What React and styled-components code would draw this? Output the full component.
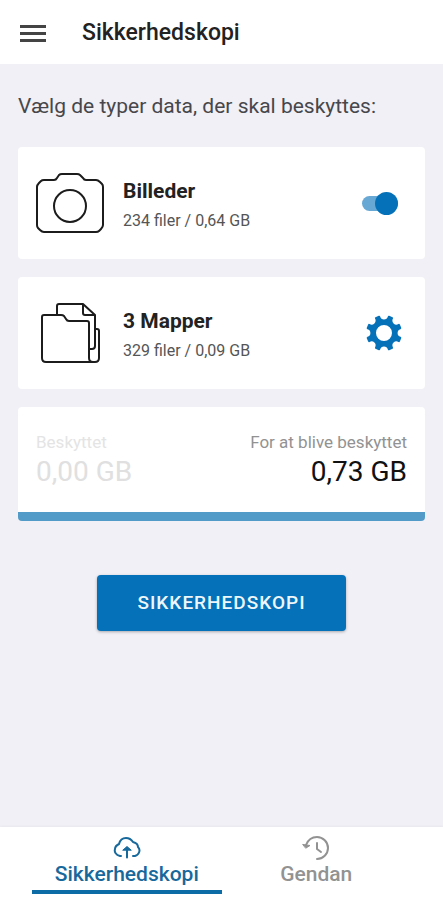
import { useState } from "react";
import styled, { createGlobalStyle } from "styled-components";

function gearPath() {
  const point = (deg) => {
    const a = (deg * Math.PI) / 180;
    return `${(19 + 17 * Math.cos(a)).toFixed(2)} ${(19 + 17 * Math.sin(a)).toFixed(2)}`;
  };
  let d = "";
  for (let i = 0; i < 8; i++) {
    const a = 22.5 + i * 45;
    d += `${i === 0 ? "M" : "L"}${point(a - 6)}L${point(a + 6)}`;
    d += `A5 5 0 0 0 ${point(a + 39)}`;
  }
  return `${d}ZM28 19a9 9 0 1 0-18 0a9 9 0 1 0 18 0Z`;
}

function CameraIcon() {
  return (
    <svg width="70" height="64" viewBox="0 0 70 64" fill="none" stroke="#1c1c1c" strokeWidth="2" strokeLinejoin="round" aria-hidden="true">
      <path d="M9 9H19Q21 9 22 7L24 4Q25 3 27 3H42Q44 3 45 4L48 7Q49 9 51 9H61Q63 9 65 11L67 13Q68 14 68 16V54Q68 56 66 58L64 60Q63 61 61 61H9Q7 61 5 59L3 57Q2 56 2 54V16Q2 14 4 12L6 10Q7 9 9 9Z" />
      <circle cx="35" cy="35" r="16" />
    </svg>
  );
}

function FoldersIcon() {
  return (
    <svg width="70" height="64" viewBox="0 0 70 64" fill="none" stroke="#1c1c1c" strokeWidth="2" strokeLinejoin="round" aria-hidden="true">
      <path d="M22 13V5Q22 3 24 3H48L60 14V45Q60 48 57 48H54" />
      <path d="M48 3V12Q48 14 50 14H59" />
      <path d="M60 28H62Q64 28 64 30V57Q64 61 60 61H58Q54 61 54 57V22Q54 20 52 20H34Q32 20 31 18L29 15Q28 14 26 14H9Q7 14 7 16V57Q7 61 11 61H58" />
    </svg>
  );
}

function CloudIcon() {
  return (
    <svg width="28" height="24" viewBox="0 0 28 24" fill="none" stroke="currentColor" strokeWidth="2" strokeLinecap="round" strokeLinejoin="round" aria-hidden="true">
      <path d="M8 20H7C3 19 1 16 2 13C2 10 4 9 6 8C7 4 10 2 13 2C16 2 18 3 20 6C24 7 25 9 25 11C28 14 26 19 22 20H20" />
      <path d="M14 21.5V12" />
      <path d="M10 14L14 10.5L18 14Z" fill="currentColor" strokeWidth="1" />
    </svg>
  );
}

function HistoryIcon() {
  return (
    <svg width="28" height="24" viewBox="0 0 28 24" fill="none" stroke="currentColor" strokeWidth="2" strokeLinecap="round" strokeLinejoin="round" aria-hidden="true">
      <path d="M4 9C6 4 10 1 15 1C21 1 26 6 26 12C26 18 21 23 15 23" />
      <path d="M1 8.5L8 9.5L4 12Z" fill="currentColor" strokeWidth="1" />
      <path d="M15 7V13L19 16" />
    </svg>
  );
}

function App() {
  const [pictures, setPictures] = useState(true);

  return (
    <Page>
      <GlobalStyle />
      <Header>
        <MenuButton aria-label="Menu">
          <span />
          <span />
          <span />
        </MenuButton>
        <Title>Sikkerhedskopi</Title>
      </Header>
      <Main>
        <Intro>Vælg de typer data, der skal beskyttes:</Intro>
        <Cards>
          <Card>
            <CameraIcon />
            <CardText>
              <CardTitle as="label" htmlFor="pictures">
                Billeder
              </CardTitle>
              <CardInfo>234 filer / 0,64 GB</CardInfo>
            </CardText>
            <Switch
              type="checkbox"
              role="switch"
              id="pictures"
              checked={pictures}
              onChange={(e) => setPictures(e.target.checked)}
            />
          </Card>
          <Card>
            <FoldersIcon />
            <CardText>
              <CardTitle>3 Mapper</CardTitle>
              <CardInfo>329 filer / 0,09 GB</CardInfo>
            </CardText>
            <GearButton aria-label="Indstillinger">
              <svg width="38" height="38" viewBox="0 0 38 38">
                <path d={gearPath()} fill="#0571b8" fillRule="evenodd" stroke="#0571b8" strokeWidth="2" strokeLinejoin="round" />
              </svg>
            </GearButton>
          </Card>
          <Summary>
            <Amount $faded>
              <AmountLabel>Beskyttet</AmountLabel>
              <AmountValue>0,00 GB</AmountValue>
            </Amount>
            <Amount $right>
              <AmountLabel>For at blive beskyttet</AmountLabel>
              <AmountValue>0,73 GB</AmountValue>
            </Amount>
          </Summary>
        </Cards>
        <BackupButton>Sikkerhedskopi</BackupButton>
      </Main>
      <TabBar>
        <Tab href="#backup" $active aria-current="page">
          <CloudIcon />
          Sikkerhedskopi
        </Tab>
        <Tab href="#restore">
          <HistoryIcon />
          Gendan
        </Tab>
      </TabBar>
    </Page>
  );
}

const GlobalStyle = createGlobalStyle`
  * {
    box-sizing: border-box;
  }

  body {
    margin: 0;
    background: #f1f0f6;
    font-family: Roboto, "Liberation Sans", sans-serif;
  }

  button {
    border: none;
    padding: 0;
    background: none;
    font-family: inherit;
    cursor: pointer;
  }
`;

const Page = styled.div`
  display: flex;
  flex-direction: column;
  min-height: 100vh;
`;

const Header = styled.header`
  display: flex;
  align-items: center;
  gap: 36px;
  height: 64px;
  padding: 2px 20px 0;
  background: #fff;
`;

const MenuButton = styled.button`
  display: flex;
  flex-direction: column;
  gap: 4px;
  width: 26px;

  span {
    height: 3px;
    background: #444;
  }
`;

const Title = styled.h1`
  margin: 0;
  font-size: 23px;
  line-height: 28px;
  font-weight: 500;
  color: #222;
`;

const Main = styled.main`
  display: flex;
  flex-direction: column;
  flex: 1;
  padding: 28px 18px;
`;

const Intro = styled.p`
  margin: 0 0 27px;
  font-size: 21px;
  line-height: 28px;
  color: #47474b;
`;

const Cards = styled.div`
  display: flex;
  flex-direction: column;
  gap: 18px;
`;

const Card = styled.section`
  display: flex;
  align-items: center;
  gap: 18px;
  min-height: 112px;
  padding: 0 22px 0 17px;
  border-radius: 4px;
  background: #fff;
`;

const CardText = styled.div`
  display: flex;
  flex-direction: column;
  gap: 8px;
  flex: 1;
  padding-top: 4px;
`;

const CardTitle = styled.h2`
  margin: 0;
  font-size: 21px;
  line-height: 24px;
  font-weight: 700;
  color: #222;
`;

const CardInfo = styled.span`
  font-size: 16px;
  line-height: 20px;
  color: #555;
`;

const Switch = styled.input`
  appearance: none;
  display: flex;
  align-items: center;
  width: 36px;
  height: 15px;
  margin: 0 5px 0 0;
  border-radius: 8px;
  background: ${({ checked }) => (checked ? "#68a8d4" : "#bbb")};
  cursor: pointer;

  &::before {
    content: "";
    width: 23px;
    height: 23px;
    margin-left: ${({ checked }) => (checked ? "auto" : "0")};
    border-radius: 50%;
    background: ${({ checked }) => (checked ? "#0571b8" : "#f5f5f5")};
  }
`;

const GearButton = styled.button`
  display: flex;
`;

const Summary = styled.section`
  display: flex;
  justify-content: space-between;
  padding: 25px 18px 24px;
  border-bottom: 9px solid #529ac8;
  border-radius: 4px;
  background: #fff;
`;

const Amount = styled.div`
  display: flex;
  flex-direction: column;
  gap: 4px;
  text-align: ${({ $right }) => ($right ? "right" : "left")};
  color: ${({ $faded }) => ($faded ? "#e0e0e0" : "#111")};

  span {
    color: ${({ $faded }) => ($faded ? "#e4e4e4" : "#929292")};
  }
`;

const AmountLabel = styled.span`
  font-size: 17px;
  line-height: 20px;
`;

const AmountValue = styled.strong`
  font-size: 28px;
  line-height: 32px;
  font-weight: 400;
`;

const BackupButton = styled.button`
  align-self: center;
  margin-top: 54px;
  && {
    padding: 16px 40px;
    background: #0571b8;
  }
  border-radius: 4px;
  box-shadow: 0 1px 3px rgba(0, 0, 0, 0.3);
  font-size: 19px;
  line-height: 24px;
  font-weight: 500;
  letter-spacing: 1px;
  text-transform: uppercase;
  color: #edf7fc;
`;

const TabBar = styled.nav`
  display: flex;
  height: 73px;
  padding: 0 32px;
  background: #fff;
  box-shadow: 0 -1px 2px rgba(0, 0, 0, 0.04);
`;

const Tab = styled.a`
  display: flex;
  flex-direction: column;
  align-items: center;
  flex: 1;
  height: 67px;
  padding-top: 9px;
  border-bottom: 4px solid ${({ $active }) => ($active ? "#0d6ba6" : "transparent")};
  font-size: 21px;
  line-height: 28px;
  font-weight: 500;
  text-decoration: none;
  color: ${({ $active }) => ($active ? "#17699c" : "#929292")};
`;

export default App;
